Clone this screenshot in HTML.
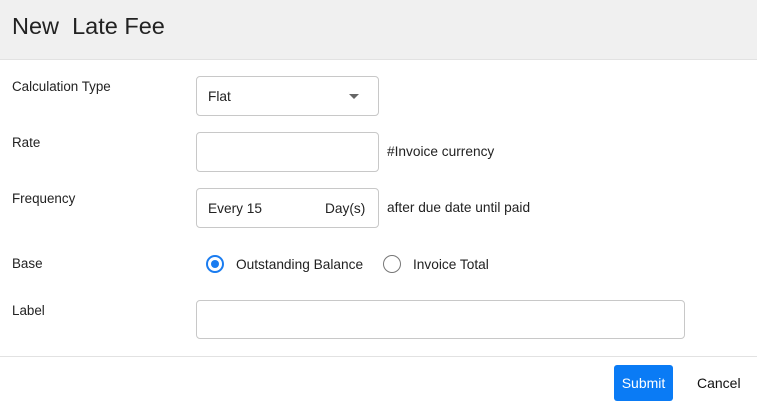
<!DOCTYPE html>
<html><head><style>
body{margin:0;width:757px;height:417px;background:#fff;font-family:"Liberation Sans",Arial,sans-serif;position:relative;overflow:hidden;color:#222}
.a{position:absolute}
.hdr{left:0;top:0;width:757px;height:59px;background:#f0f0f0;border-bottom:1px solid #e2e2e2}
.hdr span{position:absolute;left:12px;top:13px;font-size:23.5px;color:#222}
.lbl{font-size:13.4px;left:12px}
.box{border:1px solid #c8c8c8;border-radius:4px;box-sizing:border-box;background:#fff}
.t{font-size:13.7px}
</style></head><body>
<div class="a hdr"><span>New&nbsp; Late Fee</span></div>
<div class="a lbl" style="top:79px">Calculation Type</div>
<div class="a lbl" style="top:135px">Rate</div>
<div class="a lbl" style="top:191px">Frequency</div>
<div class="a lbl" style="top:256px">Base</div>
<div class="a lbl" style="top:303px">Label</div>
<div class="a box" style="left:196px;top:76px;width:183px;height:40px"></div>
<div class="a t" style="left:208px;top:89px">Flat</div>
<div class="a" style="left:349px;top:94px;width:0;height:0;border-left:5px solid transparent;border-right:5px solid transparent;border-top:5px solid #666"></div>
<div class="a box" style="left:196px;top:132px;width:183px;height:40px"></div>
<div class="a t" style="left:387px;top:144px">#Invoice currency</div>
<div class="a box" style="left:196px;top:188px;width:183px;height:40px"></div>
<div class="a t" style="left:208px;top:201px">Every 15</div>
<div class="a t" style="left:325px;top:201px">Day(s)</div>
<div class="a t" style="left:387px;top:200px">after due date until paid</div>
<div class="a" style="left:206px;top:255px;width:14px;height:14px;border:2px solid #1a7cf0;border-radius:50%"></div>
<div class="a" style="left:211px;top:260px;width:8px;height:8px;background:#1a7cf0;border-radius:50%"></div>
<div class="a t" style="left:236px;top:257px">Outstanding Balance</div>
<div class="a" style="left:383px;top:255px;width:16px;height:16px;border:1px solid #777;border-radius:50%"></div>
<div class="a t" style="left:413px;top:257px">Invoice Total</div>
<div class="a box" style="left:196px;top:300px;width:489px;height:39px"></div>
<div class="a" style="left:0;top:356px;width:757px;height:1px;background:#e2e2e2"></div>
<div class="a" style="left:614px;top:365px;width:59px;height:36px;background:#0a7bf5;border-radius:3px;color:#fff;font-size:14px;text-align:center;line-height:36px">Submit</div>
<div class="a" style="left:697px;top:375px;font-size:14px;color:#111">Cancel</div>
</body></html>
